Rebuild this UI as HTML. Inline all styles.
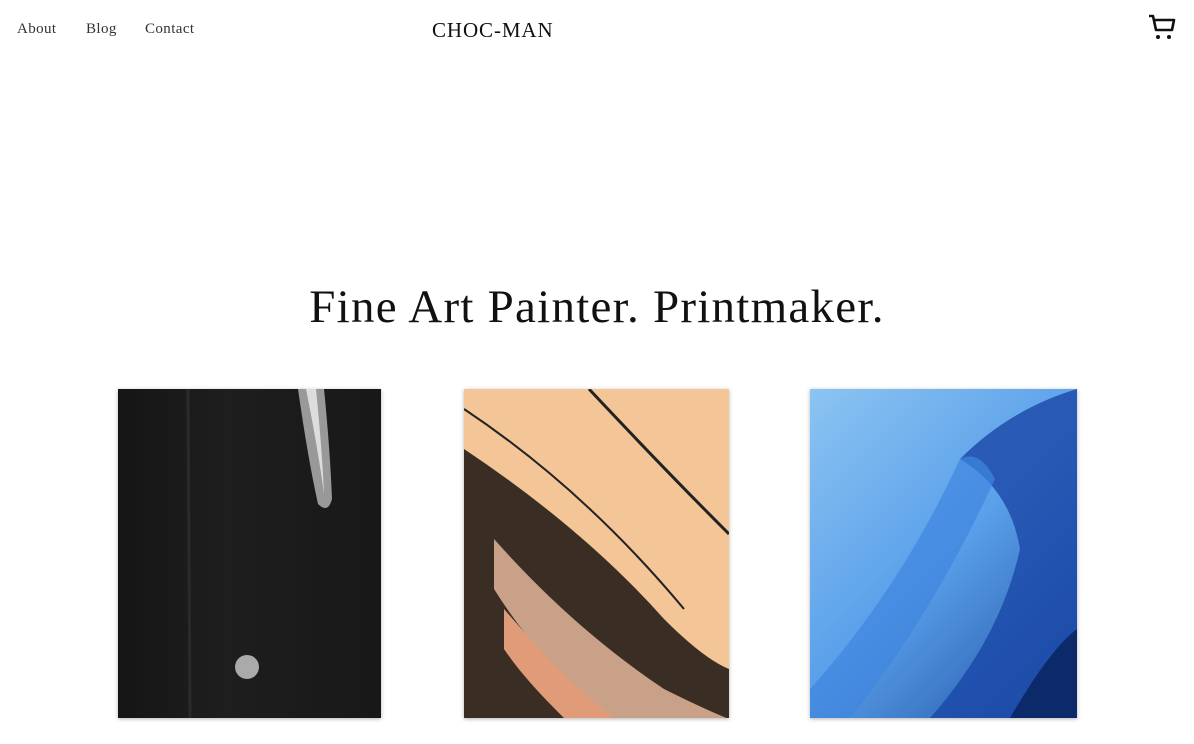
<!DOCTYPE html>
<html><head><style>
body{margin:0;width:1194px;height:744px;background:#fff;position:relative;overflow:hidden;font-family:"Liberation Serif",serif;color:#111}
.nav{position:absolute;top:21px;font-size:15px;color:#333;letter-spacing:0.4px}
.logo{position:absolute;left:432px;top:18px;font-size:21px;letter-spacing:0.9px}
h1{position:absolute;left:0;width:1194px;text-align:center;top:280px;margin:0;font-weight:normal;font-size:47px;letter-spacing:1.25px}
.img{position:absolute;top:389px;height:329px;box-shadow:0 1px 4px rgba(0,0,0,.3);overflow:hidden}
</style></head><body>
<div class="nav" style="left:17px">About</div>
<div class="nav" style="left:86px">Blog</div>
<div class="nav" style="left:145px">Contact</div>
<div class="logo">CHOC-MAN</div>
<svg style="position:absolute;left:1147px;top:13px" width="30" height="28" viewBox="0 0 30 28" fill="none" stroke="#111" stroke-width="2.6" stroke-linejoin="round"><path d="M2 3h4l3 14h16l2-10H8"/><circle cx="11" cy="24" r="2" fill="#111" stroke="none"/><circle cx="22" cy="24" r="2" fill="#111" stroke="none"/></svg>
<h1>Fine Art Painter. Printmaker.</h1>
<div class="img" style="left:118px;width:263px;background:linear-gradient(90deg,#151515,#1e1e1e 40%,#181818)">
<svg width="263" height="329"><path d="M180 0 L206 0 Q212 60 214 110 Q210 125 200 115 Q190 70 180 0Z" fill="#999"/><path d="M188 0 L198 0 Q204 60 206 105 Q200 60 188 0Z" fill="#ddd"/><circle cx="129" cy="278" r="12" fill="#aaa"/><path d="M70 0 L72 329" stroke="#2a2a2a" stroke-width="3"/></svg></div>
<div class="img" style="left:464px;width:265px;background:#f3c597">
<svg width="265" height="329"><path d="M0 60 Q120 140 200 230 Q240 270 265 280 L265 329 L0 329Z" fill="#3a2e24"/><path d="M30 150 Q110 240 200 300 Q240 320 265 330 L150 329 Q80 280 30 200Z" fill="#c9a189"/><path d="M40 220 Q100 290 150 329 L100 329 Q60 290 40 260Z" fill="#e09b78"/><path d="M125 0 Q200 80 265 145" stroke="#222" stroke-width="3" fill="none"/><path d="M0 20 Q120 100 220 220" stroke="#222" stroke-width="2" fill="none"/></svg></div>
<div class="img" style="left:810px;width:267px;background:linear-gradient(135deg,#8cc4f2,#5aa0ea 50%,#1e4fa0)">
<svg width="267" height="329"><path d="M150 70 Q200 20 267 0 L267 329 L120 329 Q190 250 210 160 Q200 100 150 70Z" fill="#1a47a8" opacity=".8"/><path d="M0 300 Q90 200 150 70 Q170 60 185 90 Q120 230 40 329 L0 329Z" fill="#3f86e0" opacity=".7"/><path d="M200 329 Q240 260 267 240 L267 329Z" fill="#0c2a6a"/></svg></div>
</body></html>
